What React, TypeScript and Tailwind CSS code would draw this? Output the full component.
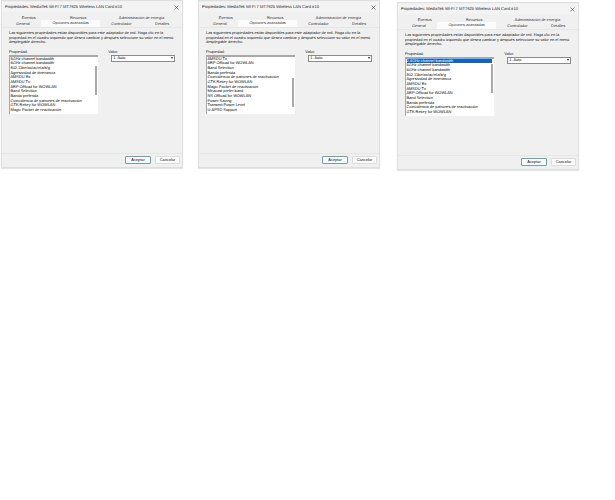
import React from 'react';

interface DialogProps {
  items: string[];
  selected?: boolean;
  thumbClass: string;
  className: string;
}

const first = [
  '5GHz channel bandwidth',
  '6GHz channel bandwidth',
  '802.11be/ax/ac/n/a/b/g',
  'Agresividad de itinerancia',
  'AMSDU Rx',
  'AMSDU Tx',
  'ARP Offload for WOWLAN',
  'Band Selection',
  'Banda preferida',
  'Coincidencia de patrones de reactivación',
  'GTK Rekey for WOWLAN',
  'Magic Packet de reactivación',
];

const second = [
  'AMSDU Tx',
  'ARP Offload for WOWLAN',
  'Band Selection',
  'Banda preferida',
  'Coincidencia de patrones de reactivación',
  'GTK Rekey for WOWLAN',
  'Magic Packet de reactivación',
  'Miracast prefer band',
  'NS Offload for WOWLAN',
  'Power Saving',
  'Transmit Power Level',
  'U-APSD Support',
];

const third = [
  '2.4GHz channel bandwidth',
  '5GHz channel bandwidth',
  '6GHz channel bandwidth',
  '802.11be/ax/ac/n/a/b/g',
  'Agresividad de itinerancia',
  'AMSDU Rx',
  'AMSDU Tx',
  'ARP Offload for WOWLAN',
  'Band Selection',
  'Banda preferida',
  'Coincidencia de patrones de reactivación',
  'GTK Rekey for WOWLAN',
];

function Dialog({ items, selected, thumbClass, className }: DialogProps) {
  return (
    <div className={`w-[182px] h-[168px] flex flex-col bg-[#f0f0f0] border border-[#dedede] shadow-[0_1px_1px_rgba(0,0,0,0.1)] text-[#222] ${className}`}>
      <div className="h-[10px] mt-[1px] flex items-center justify-between pl-[3px] pr-[3px] text-[4.1px] text-[#222] bg-[#f3f3f3]">
        <span>Propiedades: MediaTek Wi-Fi 7 MT7925 Wireless LAN Card #10</span>
        <svg width="5" height="5" viewBox="0 0 5 5" className="stroke-[#444]" strokeWidth="0.6">
          <path d="M0.5 0.5L4.5 4.5M4.5 0.5L0.5 4.5" />
        </svg>
      </div>

      <div className="mt-[3px] h-[6px] flex items-center text-[3.9px] text-[#333] text-center">
        <span className="w-[54px]">Eventos</span>
        <span className="w-[46px]">Recursos</span>
        <span className="w-[82px]">Administración de energía</span>
      </div>
      <div className="h-[6px] flex items-center text-[3.9px] text-[#333] text-center">
        <span className="w-[3px]" />
        <span className="w-[36px]">General</span>
        <span className="w-[60px] h-[7px] -mt-[1px] bg-[#fbfbfb] leading-[6px]">Opciones avanzadas</span>
        <span className="w-[42px]">Controlador</span>
        <span className="w-[40px]">Detalles</span>
      </div>

      <div className="flex-1 min-h-0 px-[7px] pt-[3px] border-y border-[#e6e6e6]">
        <p className="text-[3.9px] leading-[4.6px] text-[#111] whitespace-nowrap">
          Las siguientes propiedades están disponibles para este adaptador de red. Haga clic en la
          <br />
          propiedad en el cuadro izquierdo que desea cambiar y después seleccione su valor en el menú
          <br />
          desplegable derecho.
        </p>
        <div className="mt-[4px] flex">
          <div className="w-[91px]">
            <div className="text-[3.9px] leading-[5px] text-[#111]">Propiedad:</div>
            <div className="mt-[1px] h-[59px] relative bg-white border-t-[2px] border-l border-[#a8a8a8] pl-[0.5px]">
              {items.map((item, i) => (
                <div
                  key={item}
                  className={`h-[4.65px] w-[85px] text-[3.9px] leading-[4.65px] whitespace-nowrap ${
                    selected && i === 0 ? 'bg-[#0a66c8] text-white' : 'text-black'
                  }`}
                >
                  {item}
                </div>
              ))}
              <div className={`absolute right-[1px] w-[2px] bg-[#a9a9a9] ${thumbClass}`} />
            </div>
          </div>
          <div className="ml-[10px] w-[68px]">
            <div className="text-[3.9px] leading-[5px] text-[#111]">Valor:</div>
            <div className="mt-[1px] ml-[3px] h-[7px] flex items-center justify-between bg-white border border-[#8a8a8a] pl-[1px] pr-[1px] text-[3.9px] text-black">
              <span>1. Auto</span>
              <span className="w-0 h-0 border-x-[1.5px] border-x-transparent border-t-[2px] border-t-[#222]" />
            </div>
          </div>
        </div>
      </div>

      <div className="h-[13px] flex items-start justify-end gap-[4px] pr-[2px] pt-[2px]">
        <button className="w-[26px] h-[8px] bg-[#fbfbfb] rounded-[1px] border border-[#6f9fb0] text-[3.9px] leading-none text-[#111]">
          Aceptar
        </button>
        <button className="w-[25px] h-[8px] bg-[#fbfbfb] rounded-[1px] border border-[#dcdcdc] text-[3.9px] leading-none text-[#111]">
          Cancelar
        </button>
      </div>
    </div>
  );
}

export default function App() {
  return (
    <div className="w-[615px] h-[500px] bg-white flex items-start pl-[1px] font-['Liberation_Sans',sans-serif] [text-rendering:geometricPrecision]">
      <Dialog items={first} thumbClass="top-[9px] h-[29px]" className="" />
      <Dialog items={second} thumbClass="top-[21px] h-[29px]" className="ml-[15px]" />
      <Dialog items={third} selected thumbClass="top-[5px] h-[29px]" className="ml-[17px] mt-[2px]" />
    </div>
  );
}
